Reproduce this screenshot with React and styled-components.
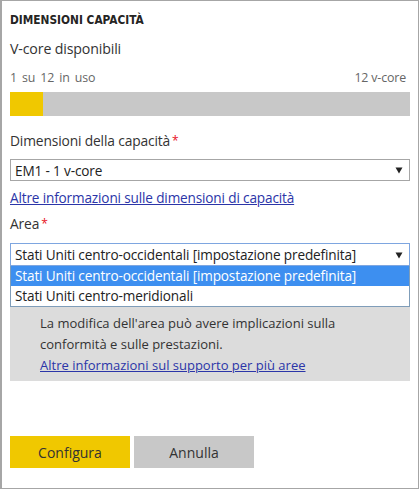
import React from "react";
import styled, { createGlobalStyle } from "styled-components";

const GlobalStyle = createGlobalStyle`
  html, body { margin: 0; padding: 0; background: #fff; }
  body { font-family: "Open Sans", "Noto Sans", sans-serif; color: #333; }
  * { box-sizing: border-box; }
`;

const Panel = styled.div`
  width: 419px;
  height: 489px;
  border: 1px solid #a6a6a6;
  border-left-width: 2px;
  padding: 11px 8px 0 8px;
  background: #fff;
  display: flex;
  flex-direction: column;
  letter-spacing: -0.15px;
`;

const Title = styled.div`
  font-family: "DejaVu Sans Condensed", "Liberation Sans Narrow", sans-serif;
  font-weight: bold;
  font-size: 11.8px;
  line-height: 16px;
  color: #252423;
  letter-spacing: 0;
`;

const Heading = styled.div`
  margin-top: 11px;
  font-size: 14.2px;
  line-height: 20px;
  color: #333;
`;

const UsageRow = styled.div`
  margin-top: 11px;
  display: flex;
  justify-content: space-between;
  font-size: 12.4px;
  line-height: 16px;
  color: #666;
  padding-right: 4px;
`;

const UsageLeft = styled.span`
  word-spacing: 2px;
`;

const Bar = styled.div`
  margin-top: 6px;
  height: 24px;
  width: 400px;
  background: #c8c8c8;
  display: flex;
`;

const BarFill = styled.div`
  height: 100%;
  background: #f0c800;
`;

const Label = styled.div`
  margin-top: ${(p) => p.$mt}px;
  font-size: 13.8px;
  line-height: 20px;
  color: #333;
`;

const Required = styled.span`
  color: #e81123;
  margin-left: 2px;
  font-size: 12px;
  vertical-align: top;
`;

const SelectWrap = styled.div`
  position: relative;
  margin-top: ${(p) => p.$mt}px;
  width: 400px;
`;

const SelectBox = styled.div`
  height: ${(p) => p.$h}px;
  border: 1px solid ${(p) => (p.$focused ? "#7ea6e0" : "#a6a6a6")};
  display: flex;
  align-items: center;
  justify-content: space-between;
  padding: 0 6px 0 4px;
  font-size: 13.6px;
  color: #222;
  background: #fff;
`;

const Arrow = styled.svg`
  width: 8px;
  height: 8px;
  flex: none;
`;

const Dropdown = styled.div`
  position: absolute;
  left: 0;
  top: 100%;
  width: 400px;
  border: 1px solid #7f9db9;
  border-top: none;
  background: #fff;
  z-index: 2;
`;

const Option = styled.div`
  height: 20px;
  line-height: 20px;
  padding-left: 4px;
  font-size: 13.6px;
  color: ${(p) => (p.$selected ? "#fff" : "#222")};
  background: ${(p) => (p.$selected ? "#3d8ff0" : "#fff")};
`;

const Link = styled.a`
  display: block;
  margin-top: ${(p) => p.$mt || 0}px;
  font-size: 13.6px;
  line-height: 20px;
  color: #2b35a8;
  text-decoration: underline;
`;

const InfoBox = styled.div`
  margin-top: 12px;
  width: 400px;
  background: #dcdcdc;
  padding: 35px 10px 5px 30px;
  font-size: 13px;
  line-height: 21px;
  color: #333;
  letter-spacing: 0;
`;

const InfoText = styled.div``;

const InfoLink = styled.a`
  display: block;
  font-size: 13px;
  line-height: 21px;
  color: #2b35a8;
  text-decoration: underline;
`;

const Actions = styled.div`
  margin-top: 55px;
  display: flex;
  gap: 4px;
`;

const Button = styled.button`
  width: 120px;
  height: 32px;
  border: none;
  background: ${(p) => (p.$primary ? "#f0c800" : "#c8c8c8")};
  font-family: inherit;
  font-size: 14px;
  color: #333;
  padding: 0;
`;

const ArrowIcon = () => (
  <Arrow viewBox="0 0 8 8">
    <path d="M0.5 1.5 H7.5 L4 7.5 Z" fill="#222" />
  </Arrow>
);

export default function App() {
  return (
    <>
      <GlobalStyle />
      <Panel>
        <Title>DIMENSIONI CAPACITÀ</Title>
        <Heading>V-core disponibili</Heading>
        <UsageRow>
          <UsageLeft>1 su 12 in uso</UsageLeft>
          <span>12 v-core</span>
        </UsageRow>
        <Bar>
          <BarFill style={{ width: `${(1 / 12) * 100}%` }} />
        </Bar>
        <Label $mt={15}>
          Dimensioni della capacità<Required>*</Required>
        </Label>
        <SelectWrap $mt={8}>
          <SelectBox $h={22}>
            <span>EM1 - 1 v-core</span>
            <ArrowIcon />
          </SelectBox>
        </SelectWrap>
        <Link href="#" $mt={7}>
          Altre informazioni sulle dimensioni di capacità
        </Link>
        <Label $mt={6}>
          Area<Required>*</Required>
        </Label>
        <SelectWrap $mt={9}>
          <SelectBox $h={23} $focused>
            <span>Stati Uniti centro-occidentali [impostazione predefinita]</span>
            <ArrowIcon />
          </SelectBox>
          <Dropdown>
            <Option $selected>
              Stati Uniti centro-occidentali [impostazione predefinita]
            </Option>
            <Option>Stati Uniti centro-meridionali</Option>
          </Dropdown>
        </SelectWrap>
        <InfoBox>
          <InfoText>
            La modifica dell'area può avere implicazioni sulla
          </InfoText>
          <InfoText>conformità e sulle prestazioni.</InfoText>
          <InfoLink href="#">Altre informazioni sul supporto per più aree</InfoLink>
        </InfoBox>
        <Actions>
          <Button $primary>Configura</Button>
          <Button>Annulla</Button>
        </Actions>
      </Panel>
    </>
  );
}
